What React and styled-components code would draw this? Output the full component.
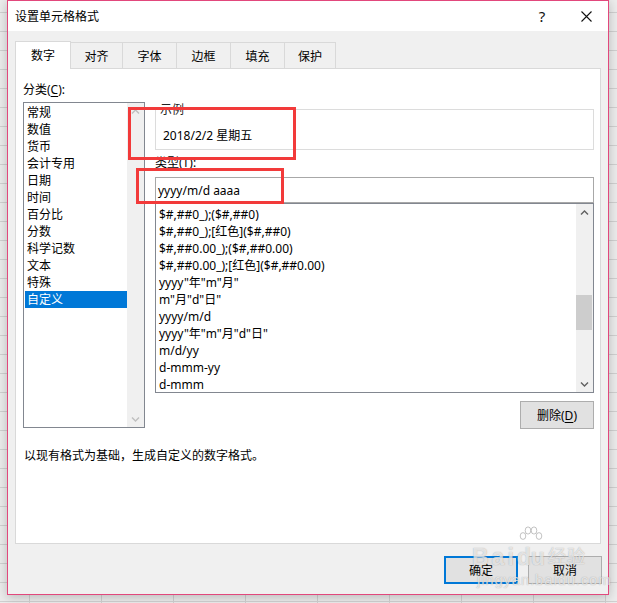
import React from 'react';
import styled, { createGlobalStyle } from 'styled-components';

const GlobalStyle = createGlobalStyle`
  html, body {
    margin: 0;
    padding: 0;
  }
  body {
    background-color: #ececec;
    background-image:
      linear-gradient(#d0d0d0 1px, transparent 1px),
      linear-gradient(90deg, #d0d0d0 1px, transparent 1px);
    background-size: 72px 19px;
    background-position: 29px 12px;
    font-family: "Noto Sans", "Noto Sans CJK SC", sans-serif;
    font-size: 12px;
    color: #000;
  }
`;

const Screen = styled.div`
  position: relative;
  width: 617px;
  height: 603px;
  box-sizing: border-box;
  padding: 0 8px 8px 7px;
`;

const Dialog = styled.div`
  box-sizing: border-box;
  height: 100%;
  display: flex;
  flex-direction: column;
  background: #f0f0f0;
  border: 1px solid #e2487c;
  box-shadow: 0 2px 10px rgba(0, 0, 0, 0.22);
`;

const TitleBar = styled.div`
  flex: none;
  height: 30px;
  display: flex;
  align-items: center;
  padding-left: 7px;
  background: #fff;
`;

const Title = styled.div`
  flex: 1;
  line-height: 17px;
`;

const TitleButton = styled.div`
  width: 44px;
  height: 30px;
  display: flex;
  align-items: center;
  justify-content: center;
  font-size: 15px;
  color: #111;
`;

const Body = styled.div`
  flex: 1;
  display: flex;
  flex-direction: column;
  padding: 10px 7px 0 7px;
`;

const TabRow = styled.div`
  height: 27px;
  display: flex;
  align-items: flex-end;
`;

const Tab = styled.div`
  position: relative;
  z-index: ${p => (p.$active ? 2 : 1)};
  box-sizing: border-box;
  width: ${p => p.$w}px;
  height: ${p => (p.$active ? 28 : 26)}px;
  margin-left: ${p => (p.$first ? 0 : -1)}px;
  margin-bottom: ${p => (p.$active ? -1 : 0)}px;
  display: flex;
  align-items: center;
  justify-content: center;
  padding-bottom: ${p => (p.$active ? 2 : 0)}px;
  border: 1px solid #d9d9d9;
  border-bottom: none;
  background: ${p => (p.$active ? '#fff' : '#f0f0f0')};
`;

const Panel = styled.div`
  position: relative;
  z-index: 0;
  box-sizing: border-box;
  height: 476px;
  padding: 12px 6px 0 7px;
  border: 1px solid #d9d9d9;
  background: #fff;
`;

const Columns = styled.div`
  display: flex;
  align-items: flex-start;
  gap: 10px;
`;

const LeftCol = styled.div`
  width: 122px;
  display: flex;
  flex-direction: column;
`;

const RightCol = styled.div`
  width: 439px;
  display: flex;
  flex-direction: column;
  padding-top: 20px;
`;

const Label = styled.div`
  height: 17px;
  line-height: 17px;
  margin-top: ${p => p.$top || 0}px;
  margin-bottom: ${p => p.$bottom || 0}px;
`;

const Key = styled.span`
  text-decoration: underline;
  text-underline-offset: 2px;
`;

const ListBox = styled.div`
  box-sizing: border-box;
  height: ${p => p.$h}px;
  display: flex;
  border: 1px solid #828790;
  background: #fff;
`;

const Items = styled.div`
  flex: 1;
  padding: ${p => p.$pad};
`;

const Item = styled.div`
  height: 17px;
  line-height: 17px;
  padding-left: 2px;
  white-space: nowrap;
  background: ${p => (p.$selected ? '#0078d7' : 'transparent')};
  color: ${p => (p.$selected ? '#fff' : '#000')};
`;

const ScrollBar = styled.div`
  flex: none;
  width: 17px;
  display: flex;
  flex-direction: column;
  background: #f0f0f0;
`;

const ArrowButton = styled.div`
  height: 17px;
  display: flex;
  align-items: center;
  justify-content: center;
`;

const Track = styled.div`
  flex: 1;
`;

const Thumb = styled.div`
  height: ${p => p.$h}px;
  margin: ${p => p.$top}px 1px 0 0;
  background: #cdcdcd;
`;

const GroupBox = styled.fieldset`
  margin: 0;
  min-width: 0;
  padding: 0 0 5px 0;
  border: 1px solid #dcdcdc;
`;

const GroupLegend = styled.legend`
  margin-left: 3px;
  padding: 0 1px;
  line-height: 17px;
  color: #222;
`;

const Sample = styled.div`
  padding: 9px 0 0 7px;
  line-height: 17px;
`;

const TypeBox = styled.div`
  box-sizing: border-box;
  height: 26px;
  margin-top: 6px;
  padding-left: 2px;
  display: flex;
  align-items: center;
  border: 1px solid #a8a8a8;
`;

const ButtonRow = styled.div`
  display: flex;
  justify-content: flex-end;
  gap: 10px;
  margin-top: ${p => p.$top || 0}px;
`;

const Button = styled.div`
  box-sizing: border-box;
  width: 74px;
  height: 28px;
  display: flex;
  align-items: center;
  justify-content: center;
  background: #e1e1e1;
  border: ${p => (p.$default ? '2px solid #0078d7' : '1px solid #adadad')};
`;

const Description = styled.div`
  margin: 18px 0 0 1px;
  line-height: 17px;
`;

const Footer = styled(ButtonRow)`
  padding-top: 12px;
  margin-right: -1px;
`;

const Marker = styled.div`
  position: absolute;
  left: ${p => p.$x}px;
  top: ${p => p.$y}px;
  width: ${p => p.$w}px;
  height: ${p => p.$h}px;
  box-sizing: border-box;
  border: 3px solid #f23a3a;
  pointer-events: none;
`;

const Watermark = styled.div`
  position: absolute;
  left: 472px;
  top: 526px;
  display: flex;
  flex-direction: column;
  color: rgba(255, 255, 255, 0.7);
  text-shadow: 0 0 1px rgba(80, 80, 80, 0.5);
  font-family: "Liberation Sans", Arial, "Noto Sans CJK SC", sans-serif;
  pointer-events: none;
`;

const MarkRow = styled.div`
  display: flex;
  align-items: flex-end;
  font-size: 23px;
  font-weight: bold;
  line-height: 22px;
  letter-spacing: 3px;
`;

const DuBlock = styled.div`
  display: flex;
  flex-direction: column;
  align-items: center;
  margin-right: 3px;
  letter-spacing: 0;
`;

const MarkCn = styled.span`
  font-size: 18px;
  font-weight: normal;
  letter-spacing: 1px;
`;

const MarkUrl = styled.div`
  margin: 4px 0 0 5px;
  font-size: 15px;
  line-height: 16px;
  letter-spacing: 0.8px;
`;

const categories = ['常规', '数值', '货币', '会计专用', '日期', '时间', '百分比', '分数', '科学记数', '文本', '特殊', '自定义'];

const formats = [
  '$#,##0_);($#,##0)',
  '$#,##0_);[红色]($#,##0)',
  '$#,##0.00_);($#,##0.00)',
  '$#,##0.00_);[红色]($#,##0.00)',
  'yyyy"年"m"月"',
  'm"月"d"日"',
  'yyyy/m/d',
  'yyyy"年"m"月"d"日"',
  'm/d/yy',
  'd-mmm-yy',
  'd-mmm'
];

const tabs = [['数字', 56], ['对齐', 53], ['字体', 55], ['边框', 55], ['填充', 55], ['保护', 52]];

function Chevron({ down, color }) {
  return (
    <svg width="9" height="6" viewBox="0 0 9 6">
      <path
        d={down ? 'M1 1.5 L4.5 5 L8 1.5' : 'M1 4.5 L4.5 1 L8 4.5'}
        stroke={color}
        strokeWidth="1.4"
        fill="none"
      />
    </svg>
  );
}

function Paw() {
  return (
    <svg width="24" height="20" viewBox="0 0 24 20" fill="rgba(255,255,255,0.75)" stroke="rgba(90,90,90,0.45)" strokeWidth="0.8">
      <ellipse cx="4" cy="10" rx="2.8" ry="3.4" />
      <ellipse cx="9" cy="4.5" rx="2.8" ry="3.6" />
      <ellipse cx="15" cy="4.5" rx="2.8" ry="3.6" />
      <ellipse cx="20" cy="10" rx="2.8" ry="3.4" />
    </svg>
  );
}

export default function App() {
  return (
    <Screen>
      <GlobalStyle />
      <Dialog>
        <TitleBar>
          <Title>设置单元格格式</Title>
          <TitleButton>?</TitleButton>
          <TitleButton>
            <svg width="11" height="11" viewBox="0 0 11 11">
              <path d="M0.5 0.5 L10.5 10.5 M10.5 0.5 L0.5 10.5" stroke="#111" strokeWidth="1.1" />
            </svg>
          </TitleButton>
        </TitleBar>

        <Body>
          <TabRow>
            {tabs.map(([name, w], i) => (
              <Tab key={name} $w={w} $first={i === 0} $active={i === 0}>{name}</Tab>
            ))}
          </TabRow>

          <Panel>
            <Columns>
              <LeftCol>
                <Label $bottom={4}>分类(<Key>C</Key>):</Label>
                <ListBox $h={326}>
                  <Items $pad="1px 0 0 1px">
                    {categories.map(c => (
                      <Item key={c} $selected={c === '自定义'}>{c}</Item>
                    ))}
                  </Items>
                  <ScrollBar>
                    <ArrowButton><Chevron color="#bfbfbf" /></ArrowButton>
                    <Track />
                    <ArrowButton><Chevron down color="#bfbfbf" /></ArrowButton>
                  </ScrollBar>
                </ListBox>
              </LeftCol>

              <RightCol>
                <GroupBox>
                  <GroupLegend>示例</GroupLegend>
                  <Sample>2018/2/2 星期五</Sample>
                </GroupBox>
                <Label $top={4}>类型(<Key>T</Key>):</Label>
                <TypeBox>yyyy/m/d aaaa</TypeBox>
                <ListBox $h={190}>
                  <Items $pad="2px 0 0 1px">
                    {formats.map(f => (
                      <Item key={f}>{f}</Item>
                    ))}
                  </Items>
                  <ScrollBar>
                    <ArrowButton><Chevron color="#606060" /></ArrowButton>
                    <Track>
                      <Thumb $top={74} $h={35} />
                    </Track>
                    <ArrowButton><Chevron down color="#606060" /></ArrowButton>
                  </ScrollBar>
                </ListBox>
                <ButtonRow $top={8}>
                  <Button>删除(<Key>D</Key>)</Button>
                </ButtonRow>
              </RightCol>
            </Columns>
            <Description>以现有格式为基础，生成自定义的数字格式。</Description>
          </Panel>

          <Footer>
            <Button $default>确定</Button>
            <Button>取消</Button>
          </Footer>
        </Body>
      </Dialog>

      <Marker $x={128} $y={107} $w={168} $h={53} />
      <Marker $x={136} $y={168} $w={148} $h={36} />

      <Watermark>
        <MarkRow>
          Bai
          <DuBlock>
            <Paw />
            du
          </DuBlock>
          <MarkCn>经验</MarkCn>
        </MarkRow>
        <MarkUrl>jingyan.baidu.com</MarkUrl>
      </Watermark>
    </Screen>
  );
}
